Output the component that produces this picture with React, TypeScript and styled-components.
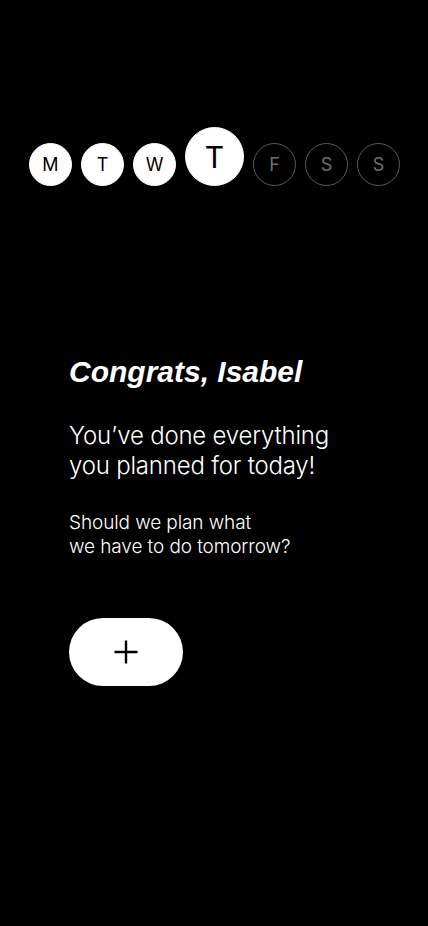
import styled, { createGlobalStyle } from "styled-components";

const GlobalStyle = createGlobalStyle`
  html, body { margin: 0; padding: 0; background: #000; }
  body { font-family: "Liberation Sans", Arial, sans-serif; }
`;

const Screen = styled.div`
  width: 428px;
  height: 926px;
  background: #000;
  color: #fff;
  display: flex;
  flex-direction: column;
  overflow: hidden;
`;

const Week = styled.div`
  display: flex;
  align-items: flex-end;
  gap: 9px;
  padding: 127px 0 0 29px;
`;

const Day = styled.div<{ done?: boolean; today?: boolean }>`
  box-sizing: border-box;
  width: ${(p) => (p.today ? 59 : 43)}px;
  height: ${(p) => (p.today ? 59 : 43)}px;
  border-radius: 50%;
  display: flex;
  align-items: center;
  justify-content: center;
  background: ${(p) => (p.done || p.today ? "#fff" : "transparent")};
  border: 1px solid ${(p) => (p.done || p.today ? "#fff" : "#5a5a5a")};
  color: ${(p) => (p.done || p.today ? "#000" : "#6f6f6f")};
  font-family: Inter, "Liberation Sans", sans-serif;
  font-weight: 400;
  font-size: ${(p) => (p.today ? 30 : 18)}px;
  line-height: 1;
`;

const Message = styled.div`
  display: flex;
  flex-direction: column;
  padding: 170px 0 0 69px;
`;

const Title = styled.h1`
  margin: 0;
  font-family: "Liberation Sans", Arial, sans-serif;
  font-style: italic;
  font-weight: 700;
  font-size: 30px;
  line-height: 32px;
  letter-spacing: 0;
`;

const Lead = styled.p`
  margin: 33px 0 0;
  font-family: Inter, "Liberation Sans", sans-serif;
  font-weight: 300;
  font-size: 24px;
  line-height: 30px;
  letter-spacing: -0.2px;
`;

const Note = styled.p`
  margin: 30px 0 0;
  font-family: Inter, "Liberation Sans", sans-serif;
  font-weight: 300;
  font-size: 19px;
  line-height: 24px;
  letter-spacing: -0.1px;
`;

const AddButton = styled.button`
  margin-top: 59px;
  width: 114px;
  height: 68px;
  border: none;
  border-radius: 34px;
  background: #fff;
  display: flex;
  align-items: center;
  justify-content: center;
  padding: 0;
  cursor: pointer;
`;

const days = [
  { label: "M", done: true },
  { label: "T", done: true },
  { label: "W", done: true },
  { label: "T", today: true },
  { label: "F" },
  { label: "S" },
  { label: "S" },
];

export default function App() {
  return (
    <>
      <GlobalStyle />
      <Screen>
        <Week>
          {days.map((d, i) => (
            <Day key={i} done={d.done} today={d.today}>
              {d.label}
            </Day>
          ))}
        </Week>
        <Message>
          <Title>Congrats, Isabel</Title>
          <Lead>
            You’ve done everything
            <br />
            you planned for today!
          </Lead>
          <Note>
            Should we plan what
            <br />
            we have to do tomorrow?
          </Note>
          <AddButton aria-label="Add">
            <svg width="24" height="24" viewBox="0 0 24 24">
              <path d="M12 0.5v23M0.5 12h23" stroke="#000" strokeWidth="2.4" />
            </svg>
          </AddButton>
        </Message>
      </Screen>
    </>
  );
}
